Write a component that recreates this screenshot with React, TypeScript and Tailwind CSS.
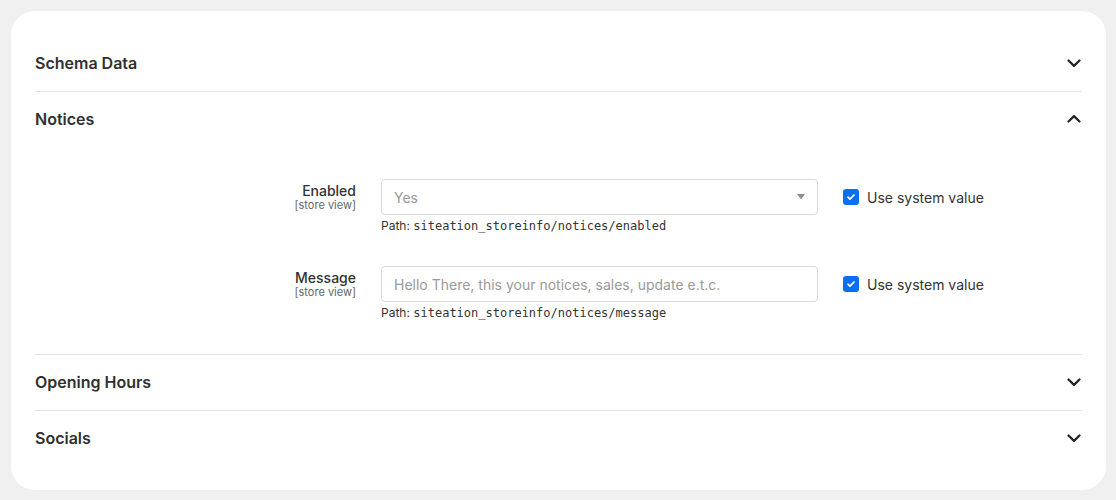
import React from "react";

function Chevron({ up = false }: { up?: boolean }) {
  return (
    <svg width="16" height="16" viewBox="0 0 16 16" fill="none" className="shrink-0">
      <path
        d={up ? "M2.5 10.5L8 5.2l5.5 5.3" : "M2.5 5.5L8 10.8l5.5-5.3"}
        stroke="#262626"
        strokeWidth="2.3"
        strokeLinecap="round"
        strokeLinejoin="round"
      />
    </svg>
  );
}

function SectionHeader({ title, open = false }: { title: string; open?: boolean }) {
  return (
    <div className="flex h-[55px] items-center justify-between pb-[2px]">
      <span className="text-[16px] font-semibold text-[#303030]">{title}</span>
      <Chevron up={open} />
    </div>
  );
}

function SystemCheckbox() {
  return (
    <label className="flex h-9 items-center gap-2 pl-[25px]">
      <span className="flex h-4 w-4 items-center justify-center rounded-[3px] bg-[#0b6ff2]">
        <svg width="10" height="10" viewBox="0 0 10 10" fill="none">
          <path d="M2 5.2l2 2L8 3" stroke="#fff" strokeWidth="1.7" strokeLinecap="round" strokeLinejoin="round" />
        </svg>
      </span>
      <span className="text-[14px] text-[#333]">Use system value</span>
    </label>
  );
}

function Field({
  label,
  path,
  children,
}: {
  label: string;
  path: string;
  children: React.ReactNode;
}) {
  return (
    <div className="flex items-start">
      <div className="w-[346px] pr-[25px] pt-1 text-right">
        <div className="text-[14px] font-medium leading-4 text-[#333]">{label}</div>
        <div className="text-[11px] leading-3 text-[#666]">[store view]</div>
      </div>
      <div className="w-[437px]">
        {children}
        <div className="mt-[3px] text-[12px] leading-4 text-[#333]">
          Path:{" "}
          <span className="font-['DejaVu_Sans_Mono',monospace] text-[12px]">{path}</span>
        </div>
      </div>
      <SystemCheckbox />
    </div>
  );
}

export default function App() {
  return (
    <div className="min-h-[500px] bg-[#f0f0f0] py-[11px] pl-[11px] pr-[10px] font-['Inter',sans-serif]">
      <div className="rounded-[24px] bg-white px-6 pb-6 pt-[25px]">
        <div className="border-b border-[#e3e3e3]">
          <SectionHeader title="Schema Data" />
        </div>
        <div className="border-b border-[#e3e3e3]">
          <SectionHeader title="Notices" open />
          <div className="flex flex-col gap-8 pb-[33px] pt-8">
            <Field label="Enabled" path="siteation_storeinfo/notices/enabled">
              <div className="flex h-9 items-center justify-between rounded-[4px] border border-[#d9d9d9] pl-3 pr-3">
                <span className="text-[14px] text-[#9a9a9a]">Yes</span>
                <svg width="8" height="6" viewBox="0 0 8 6">
                  <path d="M0 0h8L4 5.5z" fill="#8f8f8f" />
                </svg>
              </div>
            </Field>
            <Field label="Message" path="siteation_storeinfo/notices/message">
              <div className="flex h-9 items-center rounded-[4px] border border-[#d9d9d9] px-3">
                <span className="text-[14px] text-[#9a9a9a]">
                  Hello There, this your notices, sales, update e.t.c.
                </span>
              </div>
            </Field>
          </div>
        </div>
        <div className="border-b border-[#e3e3e3]">
          <SectionHeader title="Opening Hours" />
        </div>
        <SectionHeader title="Socials" />
      </div>
    </div>
  );
}
